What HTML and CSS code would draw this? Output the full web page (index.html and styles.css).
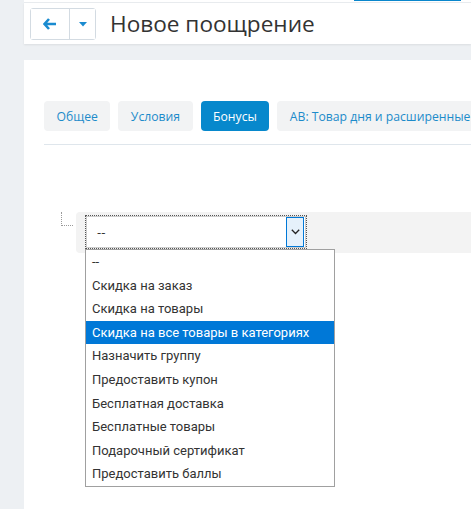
FILE: index.html
```html
<!DOCTYPE html>
<html lang="ru">
<head>
<meta charset="utf-8">
<title>Новое поощрение</title>
<link rel="stylesheet" href="styles.css">
</head>
<body>
<div class="topnav"><span class="topnav-active"></span></div>
<header class="header">
  <div class="btn-group">
    <button class="btn btn-back" type="button">
      <svg width="14" height="12" viewBox="0 0 14 12"><path d="M6 1 L1.5 6 L6 11 M2 6 H13" fill="none" stroke="#1a8bd0" stroke-width="2.6" stroke-linejoin="miter"/></svg>
    </button>
    <button class="btn btn-caret" type="button">
      <svg width="8" height="5" viewBox="0 0 8 5"><path d="M0 0 H8 L4 4.5 Z" fill="#1a8bd0"/></svg>
    </button>
  </div>
  <h1 class="title">Новое поощрение</h1>
</header>
<main class="card">
  <nav class="tabs">
    <a class="tab">Общее</a>
    <a class="tab">Условия</a>
    <a class="tab tab-active">Бонусы</a>
    <a class="tab">АВ: Товар дня и расширенные</a>
  </nav>
  <div class="divider"></div>
  <div class="tree-row">
    <span class="tree-line"></span>
    <div class="row-box">
      <div class="select-wrap">
        <div class="select">
          <span class="select-value">--</span>
          <span class="select-arrow">
            <svg width="9" height="6" viewBox="0 0 9 6"><path d="M0.8 0.8 L4.5 4.5 L8.2 0.8" fill="none" stroke="#222" stroke-width="1.3"/></svg>
          </span>
        </div>
        <ul class="options">
          <li>--</li>
          <li>Скидка на заказ</li>
          <li>Скидка на товары</li>
          <li class="selected">Скидка на все товары в категориях</li>
          <li>Назначить группу</li>
          <li>Предоставить купон</li>
          <li>Бесплатная доставка</li>
          <li>Бесплатные товары</li>
          <li>Подарочный сертификат</li>
          <li>Предоставить баллы</li>
        </ul>
      </div>
    </div>
  </div>
</main>
</body>
</html>
```
FILE: styles.css
```css
html, body {
  margin: 0;
  padding: 0;
}
body {
  background: #edf0f3;
  font-family: "Open Sans", "Liberation Sans", sans-serif;
  width: 471px;
  height: 509px;
  overflow: hidden;
  position: relative;
}
.topnav {
  height: 2px;
  margin-left: 24px;
  background: #fff;
  border-bottom: 1px solid #e8ebee;
  position: relative;
}
.topnav-active {
  position: absolute;
  left: 330px;
  top: 0;
  width: 107px;
  height: 1px;
  background: #0a86cc;
}
.header {
  margin-left: 24px;
  background: #fff;
  height: 41px;
  display: flex;
  align-items: center;
  padding-left: 6px;
  box-shadow: 0 1px 2px rgba(0,0,0,0.08);
}
.btn-group {
  display: flex;
  height: 32px;
  border: 1px solid #d3dbe2;
  border-radius: 3px;
  box-sizing: border-box;
  margin-top: 1px;
}
.btn {
  background: #fff;
  border: 0;
  padding: 0;
  margin: 0;
  display: flex;
  align-items: center;
  justify-content: center;
}
.btn-back {
  width: 39px;
  border-right: 1px solid #d3dbe2;
}
.btn-caret {
  width: 25px;
}
.title {
  margin: 0 0 0 14px;
  font-weight: 400;
  font-size: 22.6px;
  color: #333;
  line-height: 30px;
}
.card {
  margin: 16px 0 0 24px;
  background: #fff;
  height: 460px;
  padding: 41px 0 0 20px;
  box-sizing: border-box;
  overflow: hidden;
}
.tabs {
  display: flex;
  gap: 8px;
  white-space: nowrap;
}
.tab {
  height: 30px;
  padding: 0 12.5px;
  display: flex;
  align-items: center;
  background: #f2f3f4;
  color: #1d8bca;
  font-size: 12.2px;
  border-radius: 4px;
  flex-shrink: 0;
}
.tab-active {
  background: #0788cc;
  color: #fff;
}
.divider {
  margin-top: 13px;
  height: 1px;
  background: #dfe6ec;
}
.tree-row {
  margin-top: 67px;
  display: flex;
  align-items: flex-start;
}
.tree-line {
  width: 11px;
  height: 13px;
  margin-left: 17px;
  border-left: 1px dotted #9a9a9a;
  border-bottom: 1px dotted #9a9a9a;
  flex-shrink: 0;
}
.row-box {
  margin-left: 3px;
  flex: 1;
  height: 41px;
  background: #f3f3f3;
  border-radius: 4px 0 0 4px;
  padding: 4px 0 0 10px;
  box-sizing: border-box;
}
.select-wrap {
  position: relative;
  width: 220px;
}
.select {
  height: 32px;
  background: #fff;
  outline: 1px dotted #555;
  outline-offset: 0;
  border: 1px solid #ccc;
  box-sizing: border-box;
  display: flex;
  align-items: center;
  font-family: "Open Sans", "Liberation Sans", sans-serif;
}
.select-value {
  flex: 1;
  padding-left: 10px;
  font-size: 13px;
  color: #333;
}
.select-arrow {
  width: 16px;
  height: 28px;
  margin-right: 1px;
  background: #e5f1fb;
  border: 1px solid #0078d7;
  display: flex;
  align-items: center;
  justify-content: center;
}
.options {
  position: absolute;
  left: -1px;
  top: 33px;
  width: 250px;
  margin: 0;
  padding: 0;
  list-style: none;
  background: #fff;
  border: 1px solid #a0a0a0;
  box-sizing: border-box;
  font-family: Roboto, "Noto Sans", sans-serif;
  font-size: 13px;
  color: #333;
}
.options li {
  height: 23.6px;
  line-height: 23.6px;
  padding-left: 6px;
  white-space: nowrap;
}
.options li.selected {
  background: #0078d7;
  color: #fff;
}
```
